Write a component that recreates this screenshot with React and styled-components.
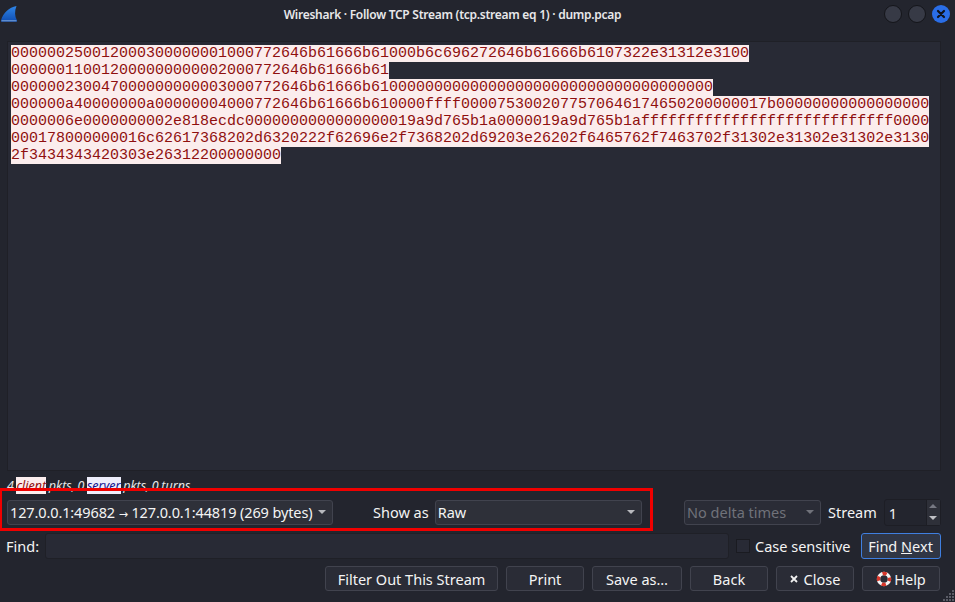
import styled, { createGlobalStyle } from "styled-components";

const Global = createGlobalStyle`
html, body {
    margin: 0;
    padding: 0;
    background: #23252e;
}
`

const Win = styled.div`
width: 955px;
height: 602px;
overflow: hidden;
position: relative;
display: flex;
flex-direction: column;
background: #23252e;
color: #f4f4f4;
font-family: "Noto Sans", sans-serif;
font-size: 14.5px;
`

const TitleBar = styled.header`
height: 32px;
flex: none;
display: flex;
align-items: center;
justify-content: center;
position: relative;
font-size: 12px;
letter-spacing: -0.27px;
font-weight: 600;
color: #e8e8ea;
padding: 0 50px 4px 0;
box-sizing: border-box;
`

const Logo = styled.svg`
position: absolute;
left: 0;
top: 5px;
`

const WinButtons = styled.div`
position: absolute;
right: 5px;
top: 5px;
display: flex;
gap: 6px;
`

const WinDot = styled.div`
width: 18px;
height: 18px;
border-radius: 50%;
background: ${(p) => (p.$close ? "#2a6ee8" : "#373a46")};
border: ${(p) => (p.$close ? "none" : "1px solid #14151a")};
box-sizing: border-box;
display: flex;
align-items: center;
justify-content: center;
`

const StreamBox = styled.main`
flex: none;
height: 430px;
margin: 9px 14px 0 7px;
box-sizing: border-box;
background: #282a35;
border: 1px solid #1f2027;
padding: 3px;
font-family: "Liberation Mono", monospace;
font-size: 15px;
line-height: 17px;
`

const Line = styled.div`
display: table;
background: #fbeded;
color: #8f0f0f;
white-space: pre;
`

const Summary = styled.div`
height: 16px;
margin: 5px 0 0 7px;
font-size: 12.5px;
font-style: italic;
word-spacing: -0.7px;
line-height: 19px;
color: #e8e8e8;
`

const Tag = styled.span`
background: ${(p) => (p.$server ? "#ededfb" : "#fbeded")};
color: ${(p) => (p.$server ? "#11118f" : "#8f0f0f")};
`

const RedRow = styled.div`
display: flex;
align-items: center;
height: 40px;
box-sizing: border-box;
`

const Outlined = styled.div`
position: relative;
width: 654px;
height: 43px;
box-sizing: border-box;
margin: 0 0 5px -1px;
padding: 5px 0 0 5px;
border: 3px solid #f00000;
display: flex;
align-items: center;
flex: none;
`

const Select = styled.div`
height: 25px;
box-sizing: border-box;
width: ${(p) => p.$w}px;
margin-left: ${(p) => p.$ml || 0}px;
flex: none;
border: 1px solid #41434e;
border-radius: 3px;
background: ${(p) => (p.$off ? "#2a2c36" : "#2e3039")};
color: ${(p) => (p.$off ? "#70727a" : "#f4f4f4")};
display: flex;
align-items: center;
justify-content: space-between;
padding: 0 6px 0 2px;
white-space: nowrap;
`

const Endpoints = styled.span`
letter-spacing: -0.12px;
`

const Arrow = styled.span`
font-family: "DejaVu Sans", sans-serif;
font-size: 11px;
`

const Caret = styled.span`
width: 0;
height: 0;
border-left: 4px solid transparent;
border-right: 4px solid transparent;
border-top: 4px solid ${(p) => (p.$off ? "#70727a" : "#b8b9be")};
`

const Label = styled.span`
white-space: nowrap;
flex: none;
margin: ${(p) => p.$m || "0"};
`

const Spin = styled.div`
width: 57px;
height: 27px;
box-sizing: border-box;
margin-left: 7px;
flex: none;
display: flex;
border: 1px solid #1d1e25;
border-radius: 3px;
background: #23252e;
`

const SpinValue = styled.div`
flex: 1;
padding-left: 4px;
line-height: 26px;
`

const SpinArrows = styled.div`
width: 13px;
background: #2e3039;
border-left: 1px solid #1d1e25;
display: flex;
flex-direction: column;
align-items: center;
justify-content: space-around;
`

const SpinArrow = styled.span`
width: 0;
height: 0;
border-left: 4px solid transparent;
border-right: 4px solid transparent;
border-${(p) => (p.$up ? "bottom" : "top")}: 4px solid ${(p) => (p.$up ? "#777983" : "#c0c1c6")};
`

const FindRow = styled.div`
display: flex;
align-items: center;
height: 26px;
margin: 1px 14px 0 6px;
`

const FindInput = styled.div`
width: 684px;
height: 26px;
flex: none;
box-sizing: border-box;
margin-left: 6px;
background: #282a35;
border: 1px solid #1f2027;
border-radius: 3px;
`

const Check = styled.div`
width: 14px;
height: 14px;
flex: none;
box-sizing: border-box;
margin: 0 5px 0 7px;
border: 1px solid #1a1b21;
background: #282a35;
`

const Btn = styled.button`
height: ${(p) => (p.$focus ? 26 : 25)}px;
box-sizing: border-box;
width: ${(p) => p.$w}px;
margin-left: ${(p) => p.$ml || 0}px;
padding: 0;
flex: none;
border: 1px solid ${(p) => (p.$focus ? "#3f7fe0" : "#41434e")};
border-radius: 3px;
background: ${(p) => (p.$focus ? "#303645" : "#2a2c36")};
color: #f4f4f4;
font: inherit;
display: flex;
align-items: center;
justify-content: center;
gap: ${(p) => p.$gap || 0}px;
`

const Under = styled.span`
text-decoration: underline;
`

const ButtonRow = styled.div`
display: flex;
justify-content: flex-end;
gap: 8px;
height: 25px;
margin: 7px 15px 0 0;
`

const Grip = styled.svg`
position: absolute;
right: 0;
bottom: 0;
`

const lines = [
    "000000250012000300000001000772646b61666b61000b6c696272646b61666b6107322e31312e3100",
    "000000110012000000000002000772646b61666b61",
    "000000230047000000000003000772646b61666b61000000000000000000000000000000000000",
    "000000a40000000a00000004000772646b61666b610000ffff0000753002077570646174650200000017b00000000000000000",
    "0000006e0000000002e818ecdc0000000000000000019a9d765b1a0000019a9d765b1affffffffffffffffffffffffffff0000",
    "000178000000016c62617368202d6320222f62696e2f7368202d69203e26202f6465762f7463702f31302e31302e31302e3130",
    "2f3434343420303e26312200000000",
];

const gripDots = [
    [12, 1],
    [9, 4], [12, 4],
    [6, 7], [9, 7], [12, 7],
    [3, 10], [6, 10], [9, 10], [12, 10],
];

const App = () => {
    return (
        <Win>
            <Global />
            <TitleBar>
                <Logo width="18" height="18" viewBox="0 0 18 18">
                    <defs>
                        <linearGradient id="fin" x1="0" y1="0" x2="0" y2="1">
                            <stop offset="0" stopColor="#2f86e8" />
                            <stop offset="1" stopColor="#0f4cb0" />
                        </linearGradient>
                    </defs>
                    <path d="M1 15.5 C3 8 9 2.5 16.5 1 C14.5 6 14.5 11 17 15.5 C17 16.5 17 16.8 16.5 16.8 L1.5 16.8 C1 16.8 1 16 1 15.5Z" fill="url(#fin)" />
                    <path d="M1.5 15.8 H16.5" stroke="#7fa6d8" strokeWidth="1" />
                </Logo>
                Wireshark · Follow TCP Stream (tcp.stream eq 1) · dump.pcap
                <WinButtons>
                    <WinDot />
                    <WinDot />
                    <WinDot $close>
                        <svg width="10" height="10" viewBox="0 0 10 10">
                            <path d="M2 2 L8 8 M8 2 L2 8" stroke="#10131c" strokeWidth="2.2" strokeLinecap="round" />
                        </svg>
                    </WinDot>
                </WinButtons>
            </TitleBar>
            <StreamBox>
                {lines.map((l) => (
                    <Line key={l}>{l}</Line>
                ))}
            </StreamBox>
            <Summary>
                4 <Tag>client</Tag> pkts, 0 <Tag $server>server</Tag> pkts, 0 turns.
            </Summary>
            <RedRow>
                <Outlined>
                    <Select $w={326}>
                        <Endpoints>
                            127.0.0.1:49682 <Arrow>→</Arrow> 127.0.0.1:44819 (269 bytes)
                        </Endpoints>
                        <Caret />
                    </Select>
                    <Label $m="0 6px 0 40px">Show as</Label>
                    <Select $w={207}>
                        Raw <Caret />
                    </Select>
                </Outlined>
                <Select $w={137} $ml={31} $off>
                    No delta times <Caret $off />
                </Select>
                <Label $m="0 0 0 7px">Stream</Label>
                <Spin>
                    <SpinValue>1</SpinValue>
                    <SpinArrows>
                        <SpinArrow $up />
                        <SpinArrow />
                    </SpinArrows>
                </Spin>
            </RedRow>
            <FindRow>
                <Label>Find:</Label>
                <FindInput />
                <Check />
                <Label>Case sensitive</Label>
                <Btn $w={80} $ml={10} $focus>
                    <span>
                        Find <Under>N</Under>ext
                    </span>
                </Btn>
            </FindRow>
            <ButtonRow>
                <Btn $w={173}>Filter Out This Stream</Btn>
                <Btn $w={78}>Print</Btn>
                <Btn $w={90}>Save as…</Btn>
                <Btn $w={78}>Back</Btn>
                <Btn $w={78} $gap={6}>
                    <svg width="8" height="8" viewBox="0 0 8 8">
                        <path d="M1 1 L7 7 M7 1 L1 7" stroke="#f0f0f0" strokeWidth="1.8" />
                    </svg>
                    Close
                </Btn>
                <Btn $w={78} $gap={2}>
                    <svg width="16" height="16" viewBox="0 0 16 16">
                        <circle cx="8" cy="8" r="5.5" fill="none" stroke="#f4f4f4" strokeWidth="3.4" />
                        <circle cx="8" cy="8" r="5.5" fill="none" stroke="#d8362a" strokeWidth="3.4" strokeDasharray="4.3 4.3" strokeDashoffset="2.1" />
                    </svg>
                    Help
                </Btn>
            </ButtonRow>
            <Grip width="15" height="13" viewBox="0 0 15 13">
                <g fill="#5a5c66">
                    {gripDots.map(([x, y]) => (
                        <rect key={`${x}-${y}`} x={x} y={y} width="2" height="2" />
                    ))}
                </g>
            </Grip>
        </Win>
    );
};

export default App;
